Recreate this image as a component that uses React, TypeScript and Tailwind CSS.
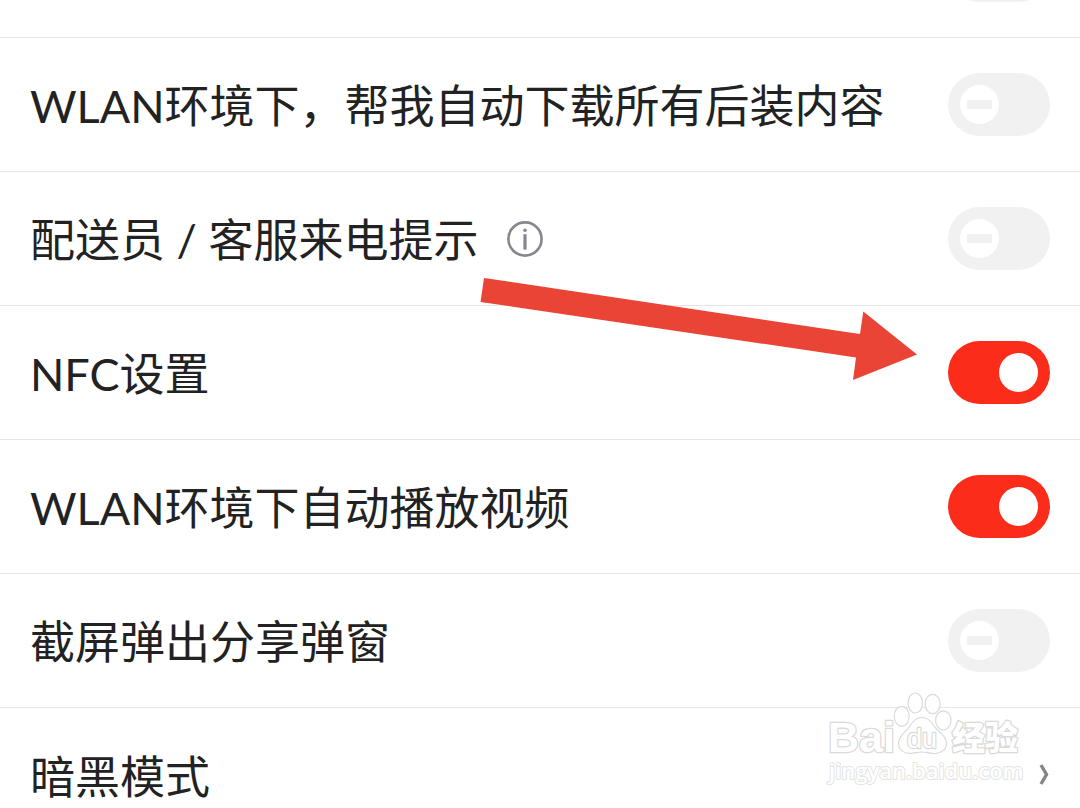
import { ReactNode } from "react";

type SwitchRowProps = {
  id: string;
  label: string;
  on?: boolean;
  info?: boolean;
};

function Row({ children }: { children: ReactNode }) {
  return (
    <li className="flex h-[134px] shrink-0 items-center justify-between border-b border-[#e6e6e6] px-[30px]">
      {children}
    </li>
  );
}

function InfoIcon() {
  return (
    <svg viewBox="0 0 36 36" className="size-9" fill="none" aria-hidden="true">
      <circle cx="18" cy="18" r="16.6" stroke="#85868e" strokeWidth="2.6" />
      <circle cx="18" cy="9.2" r="1.8" fill="#85868e" />
      <path d="M18 13.2V28.6" stroke="#85868e" strokeWidth="3.2" />
    </svg>
  );
}

function Switch({ id, on, name }: { id: string; on?: boolean; name?: string }) {
  return (
    <input
      id={id}
      type="checkbox"
      role="switch"
      aria-label={name}
      defaultChecked={on}
      className="relative h-[63px] w-[102px] shrink-0 cursor-pointer appearance-none rounded-full bg-[#f1f1f1] before:absolute before:top-3 before:left-3 before:size-[39px] before:rounded-full before:bg-white after:absolute after:top-[27px] after:left-[19px] after:h-[9px] after:w-[25px] after:bg-[#f1f1f1] checked:bg-[#fb2c1a] checked:before:left-[51px] checked:after:hidden"
    />
  );
}

function SwitchRow({ id, label, on, info }: SwitchRowProps) {
  return (
    <Row>
      <div className="flex items-center gap-[29px]">
        <label htmlFor={id} className="pt-1 whitespace-nowrap">
          {label}
        </label>
        {info && (
          <button type="button" aria-label="说明" className="cursor-pointer">
            <InfoIcon />
          </button>
        )}
      </div>
      <Switch id={id} on={on} />
    </Row>
  );
}

function Arrow() {
  return (
    <svg
      viewBox="480 278 438 102"
      className="pointer-events-none absolute top-[278px] left-[480px] h-[102px] w-[438px]"
      aria-hidden="true"
    >
      <path d="M484 278L860 334L863.300 311.500L917 354.500L853 380L856 357.500L480.500 302Z" fill="#ea4436" />
    </svg>
  );
}

function Watermark() {
  return (
    <svg
      viewBox="820 688 210 104"
      className="pointer-events-none absolute top-[688px] left-[820px] h-[104px] w-[210px]"
      fill="#fff"
      stroke="#dadada"
      strokeLinejoin="round"
    >
      <g style={{ paintOrder: "stroke" }}>
        <text x="828" y="752" fontSize="43" fontWeight="700" fontFamily="Liberation Sans, sans-serif" strokeWidth="2.6">
          Bai
        </text>
        <text x="952" y="750" fontSize="33" fontWeight="900" fontFamily="Noto Sans CJK SC, sans-serif" strokeWidth="2.6">
          经验
        </text>
        <text x="829" y="779" fontSize="22" fontWeight="600" fontFamily="Open Sans, sans-serif" strokeWidth="2" stroke="#e4e4e4">
          jingyan.baidu.com
        </text>
      </g>
      <ellipse cx="901.700" cy="716.300" rx="7.500" ry="10" strokeWidth="1.200" />
      <ellipse cx="915.300" cy="703" rx="7.200" ry="10" strokeWidth="1.200" />
      <ellipse cx="932.600" cy="704" rx="7.500" ry="9.600" strokeWidth="1.200" />
      <ellipse cx="943.300" cy="720.400" rx="7.700" ry="9.600" strokeWidth="1.200" />
      <path
        d="M922 717.500C928 717.500 931 721 934 726C938 732 947 736 946.500 744C946 751 939 754 933 753.500C928 753 926 752 922 752C918 752 915 753 910 753.300C904 753.600 898.500 750 898.500 743C898.500 736 906 732 910 726C913 721 916 717.500 922 717.500Z"
        strokeWidth="1.200"
      />
      <text x="907" y="748" fontSize="27" fontFamily="Liberation Sans, sans-serif" strokeWidth="2.400" style={{ paintOrder: "stroke" }}>
        du
      </text>
    </svg>
  );
}

export default function App() {
  return (
    <main className="relative h-screen overflow-hidden bg-white font-['Lato','Noto_Sans_CJK_SC',sans-serif] text-[45px] leading-none text-[#222222]">
      <ul className="-mt-24 flex flex-col">
        <Row>
          <span />
          <Switch id="previous" name="设置" />
        </Row>
        <SwitchRow id="download" label="WLAN环境下，帮我自动下载所有后装内容" />
        <SwitchRow id="calls" label="配送员 / 客服来电提示" info />
        <SwitchRow id="nfc" label="NFC设置" on />
        <SwitchRow id="autoplay" label="WLAN环境下自动播放视频" on />
        <SwitchRow id="share" label="截屏弹出分享弹窗" />
        <li className="shrink-0">
          <a href="#dark-mode" className="flex h-[134px] items-center justify-between px-[30px]">
            <span className="pt-1">暗黑模式</span>
            <svg viewBox="0 0 12 22" className="h-[22px] w-3" fill="none" aria-hidden="true">
              <path d="M3 1L8.500 10.500L3 20" stroke="#858585" strokeWidth="3.4" />
            </svg>
          </a>
        </li>
      </ul>
      <Arrow />
      <Watermark />
    </main>
  );
}
